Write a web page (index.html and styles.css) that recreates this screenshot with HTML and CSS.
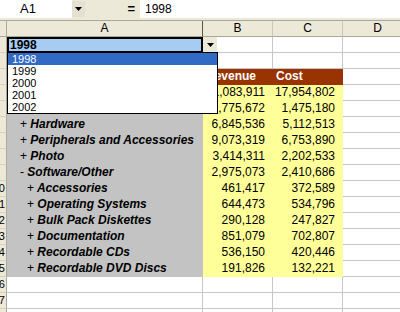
FILE: index.html
```html
<!DOCTYPE html>
<html lang="en">
<head>
  <meta charset="UTF-8" />
  <title>Sales by Category - 1998</title>
  <link rel="stylesheet" href="styles.css">
</head>
<body>

  <div class="formula-bar">
    <div class="name-box">A1</div>
    <div class="name-btn">
      <svg width="7" height="4" viewBox="0 0 7 4"><polygon points="0,0 7,0 3.5,4" fill="#000"/></svg>
    </div>
    <div class="equals">=</div>
    <div class="formula-input">1998</div>
  </div>

  <div class="sheet">
    <div class="row">
      <div class="corner"></div>
      <div class="ch ch-a">A</div>
      <div class="ch">B</div>
      <div class="ch">C</div>
      <div class="ch">D</div>
    </div>

    <div class="row">
      <div class="rh"></div>
      <div class="c sel">1998</div>
      <div class="c"></div><div class="c"></div><div class="c"></div>
    </div>
    <div class="row">
      <div class="rh"></div>
      <div class="c"></div><div class="c"></div><div class="c"></div><div class="c"></div>
    </div>
    <div class="row">
      <div class="rh"></div>
      <div class="c hdr"></div>
      <div class="c hdr">Revenue</div>
      <div class="c hdr">Cost</div>
      <div class="c"></div>
    </div>
    <div class="row">
      <div class="rh"></div>
      <div class="c lbl"></div>
      <div class="c num">21,083,911</div>
      <div class="c num">17,954,802</div>
      <div class="c"></div>
    </div>
    <div class="row">
      <div class="rh"></div>
      <div class="c lbl"></div>
      <div class="c num">1,775,672</div>
      <div class="c num">1,475,180</div>
      <div class="c"></div>
    </div>
    <div class="row">
      <div class="rh"></div>
      <div class="c lbl"><span class="sign">+</span> Hardware</div>
      <div class="c num">6,845,536</div>
      <div class="c num">5,112,513</div>
      <div class="c"></div>
    </div>
    <div class="row">
      <div class="rh"></div>
      <div class="c lbl"><span class="sign">+</span> Peripherals and Accessories</div>
      <div class="c num">9,073,319</div>
      <div class="c num">6,753,890</div>
      <div class="c"></div>
    </div>
    <div class="row">
      <div class="rh"></div>
      <div class="c lbl"><span class="sign">+</span> Photo</div>
      <div class="c num">3,414,311</div>
      <div class="c num">2,202,533</div>
      <div class="c"></div>
    </div>
    <div class="row">
      <div class="rh"></div>
      <div class="c lbl"><span class="sign">-</span> Software/Other</div>
      <div class="c num">2,975,073</div>
      <div class="c num">2,410,686</div>
      <div class="c"></div>
    </div>
    <div class="row">
      <div class="rh">10</div>
      <div class="c lbl sub"><span class="sign">+</span> Accessories</div>
      <div class="c num">461,417</div>
      <div class="c num">372,589</div>
      <div class="c"></div>
    </div>
    <div class="row">
      <div class="rh">11</div>
      <div class="c lbl sub"><span class="sign">+</span> Operating Systems</div>
      <div class="c num">644,473</div>
      <div class="c num">534,796</div>
      <div class="c"></div>
    </div>
    <div class="row">
      <div class="rh">12</div>
      <div class="c lbl sub"><span class="sign">+</span> Bulk Pack Diskettes</div>
      <div class="c num">290,128</div>
      <div class="c num">247,827</div>
      <div class="c"></div>
    </div>
    <div class="row">
      <div class="rh">13</div>
      <div class="c lbl sub"><span class="sign">+</span> Documentation</div>
      <div class="c num">851,079</div>
      <div class="c num">702,807</div>
      <div class="c"></div>
    </div>
    <div class="row">
      <div class="rh">14</div>
      <div class="c lbl sub"><span class="sign">+</span> Recordable CDs</div>
      <div class="c num">536,150</div>
      <div class="c num">420,446</div>
      <div class="c"></div>
    </div>
    <div class="row">
      <div class="rh">15</div>
      <div class="c lbl sub"><span class="sign">+</span> Recordable DVD Discs</div>
      <div class="c num">191,826</div>
      <div class="c num">132,221</div>
      <div class="c"></div>
    </div>
    <div class="row">
      <div class="rh">16</div>
      <div class="c"></div><div class="c"></div><div class="c"></div><div class="c"></div>
    </div>
    <div class="row">
      <div class="rh">17</div>
      <div class="c"></div><div class="c"></div><div class="c"></div><div class="c"></div>
    </div>
    <div class="row">
      <div class="rh">18</div>
      <div class="c"></div><div class="c"></div><div class="c"></div><div class="c"></div>
    </div>

    <!-- data validation arrow + open list for A1 -->
    <div class="cell-btn">
      <svg width="7" height="4" viewBox="0 0 7 4"><polygon points="0,0 7,0 3.5,4" fill="#000"/></svg>
    </div>
    <div class="year-list">
      <div class="year active">1998</div>
      <div class="year">1999</div>
      <div class="year">2000</div>
      <div class="year">2001</div>
      <div class="year">2002</div>
    </div>
  </div>

</body>
</html>
```

FILE: styles.css
```css
* {
  box-sizing: border-box;
}
body {
  margin: 0;
  width: 400px;
  height: 312px;
  overflow: hidden;
  background: #fff;
  color: #000;
  font-family: 'Liberation Sans', Arial, sans-serif;
  font-size: 12px;
}

/* formula bar */
.formula-bar {
  display: flex;
  height: 21px;
  background: #ECE9D8;
  border-bottom: 1px solid #ACA899;
}
.name-box {
  width: 72px;
  height: 18px;
  background: #fff;
  padding-left: 20px;
  font-size: 13px;
  line-height: 18px;
}
.name-btn {
  width: 13px;
  height: 16px;
  margin-top: 1px;
  background: #E4E1D3;
  display: flex;
  align-items: center;
  justify-content: center;
}
.equals {
  width: 55px;
  padding-right: 5px;
  text-align: right;
  font-size: 13px;
  font-weight: bold;
  line-height: 18px;
}
.formula-input {
  flex: 1;
  height: 18px;
  background: #fff;
  padding-left: 5px;
  font-size: 12px;
  line-height: 18px;
}

/* grid */
.sheet {
  position: relative;
  width: 413px;
}
.row {
  display: grid;
  grid-template-columns: 7px 196px 70px 70px 70px;
  height: 16px;
}
.corner {
  background: #ECE9D8;
  border-right: 1px solid #ACA899;
  border-bottom: 1px solid #ACA899;
}
.ch {
  background: #ECE9D8;
  border-right: 1px solid #CBC7B8;
  border-bottom: 1px solid #ACA899;
  text-align: center;
  line-height: 15px;
}
.ch-a {
  border-right-color: #55544d;
}
.rh {
  background: #ECE9D8;
  border-right: 1px solid #ACA899;
  border-bottom: 1px solid #D6D2C2;
  padding-right: 1px;
  display: flex;
  justify-content: flex-end;
  overflow: hidden;
  font-size: 11px;
  line-height: 15px;
}
.c {
  border-right: 1px solid #C6C6C6;
  border-bottom: 1px solid #C6C6C6;
  line-height: 15px;
  white-space: nowrap;
  overflow: hidden;
}
.sel {
  border: 2px solid #000;
  background: #A6CCF2;
  padding-left: 1px;
  font-weight: bold;
  line-height: 12px;
}
.hdr {
  background: #993300;
  border-color: #993300;
  color: #fff;
  font-weight: bold;
  padding-left: 3px;
}
.lbl {
  background: #C3C3C3;
  border-color: #C3C3C3;
  font-weight: bold;
  font-style: italic;
  padding-left: 13px;
}
.lbl.sub {
  padding-left: 20px;
}
.sign {
  font-style: normal;
  font-weight: normal;
}
.num {
  background: #FFFF99;
  border-color: #FFFF99;
  text-align: right;
  padding-right: 7px;
}

/* A1 dropdown */
.cell-btn {
  position: absolute;
  left: 203px;
  top: 16px;
  width: 14px;
  height: 15px;
  background: #ECE9D8;
  display: flex;
  align-items: center;
  justify-content: center;
}
.year-list {
  position: absolute;
  left: 7px;
  top: 31px;
  width: 211px;
  background: #fff;
  border: 1px solid #000;
  font-size: 11px;
}
.year {
  height: 12px;
  line-height: 12px;
  padding-left: 4px;
}
.year.active {
  background: #316AC5;
  color: #fff;
}
```
